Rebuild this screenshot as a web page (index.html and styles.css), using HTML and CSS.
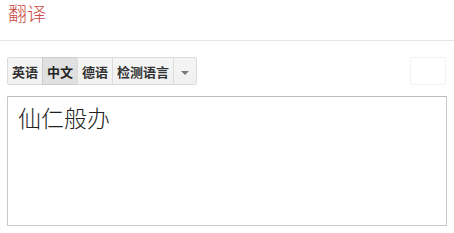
FILE: index.html
```html
<!DOCTYPE html>
<html lang="zh">
<head>
    <meta charset="UTF-8">
    <title>翻译</title>
    <link rel="stylesheet" href="styles.css">
</head>
<body>
    <div class="header">
        <span class="title">翻译</span>
    </div>
    <div class="toolbar">
        <div class="lang-group">
            <button class="lang-btn">英语</button>
            <button class="lang-btn selected">中文</button>
            <button class="lang-btn">德语</button>
            <button class="lang-btn">检测语言</button>
            <button class="lang-btn menu-btn"><span class="caret"></span></button>
        </div>
        <button class="blank-btn"></button>
    </div>
    <div class="source-box">仙仁般办</div>
</body>
</html>
```

FILE: styles.css
```css
body {
    margin: 0;
    font-family: Arial, "Liberation Sans", "Noto Sans CJK SC", sans-serif;
    background: #fff;
}

.header {
    height: 40px;
    border-bottom: 1px solid #e5e5e5;
    padding-left: 8px;
}

.title {
    display: block;
    color: #cc4a44;
    font-family: "Noto Sans CJK SC", sans-serif;
    font-weight: 300;
    font-size: 19px;
    line-height: 26px;
}

.toolbar {
    display: flex;
    justify-content: space-between;
    padding: 16px 8px 0 7px;
    height: 28px;
}

.lang-group {
    display: flex;
}

.lang-btn {
    height: 28px;
    padding: 0 4px;
    border: 1px solid #dcdcdc;
    margin-left: -1px;
    background: linear-gradient(#f5f5f5, #f1f1f1);
    color: #333;
    font-family: "Noto Sans CJK SC", sans-serif;
    font-weight: bold;
    font-size: 13px;
    cursor: pointer;
}

.lang-btn:first-child {
    margin-left: 0;
    border-radius: 2px 0 0 2px;
}

.lang-btn.selected {
    background: #e0e0e0;
    border-color: #ccc;
    color: #222;
}

.menu-btn {
    width: 24px;
    border-radius: 0 2px 2px 0;
}

.caret {
    display: inline-block;
    border-left: 4px solid transparent;
    border-right: 4px solid transparent;
    border-top: 4px solid #777;
    vertical-align: middle;
}

.blank-btn {
    width: 36px;
    height: 28px;
    border: 1px solid #f2f2f2;
    border-radius: 2px;
    background: #fff;
}

.source-box {
    margin: 11px 7px 0 7px;
    height: 115px;
    border: 1px solid #c8c8c8;
    border-top-color: #bdbdbd;
    padding: 5px 10px 8px;
    font-family: "Noto Sans CJK SC", sans-serif;
    font-weight: 300;
    font-size: 23px;
    line-height: 30px;
    color: #222;
}
```
